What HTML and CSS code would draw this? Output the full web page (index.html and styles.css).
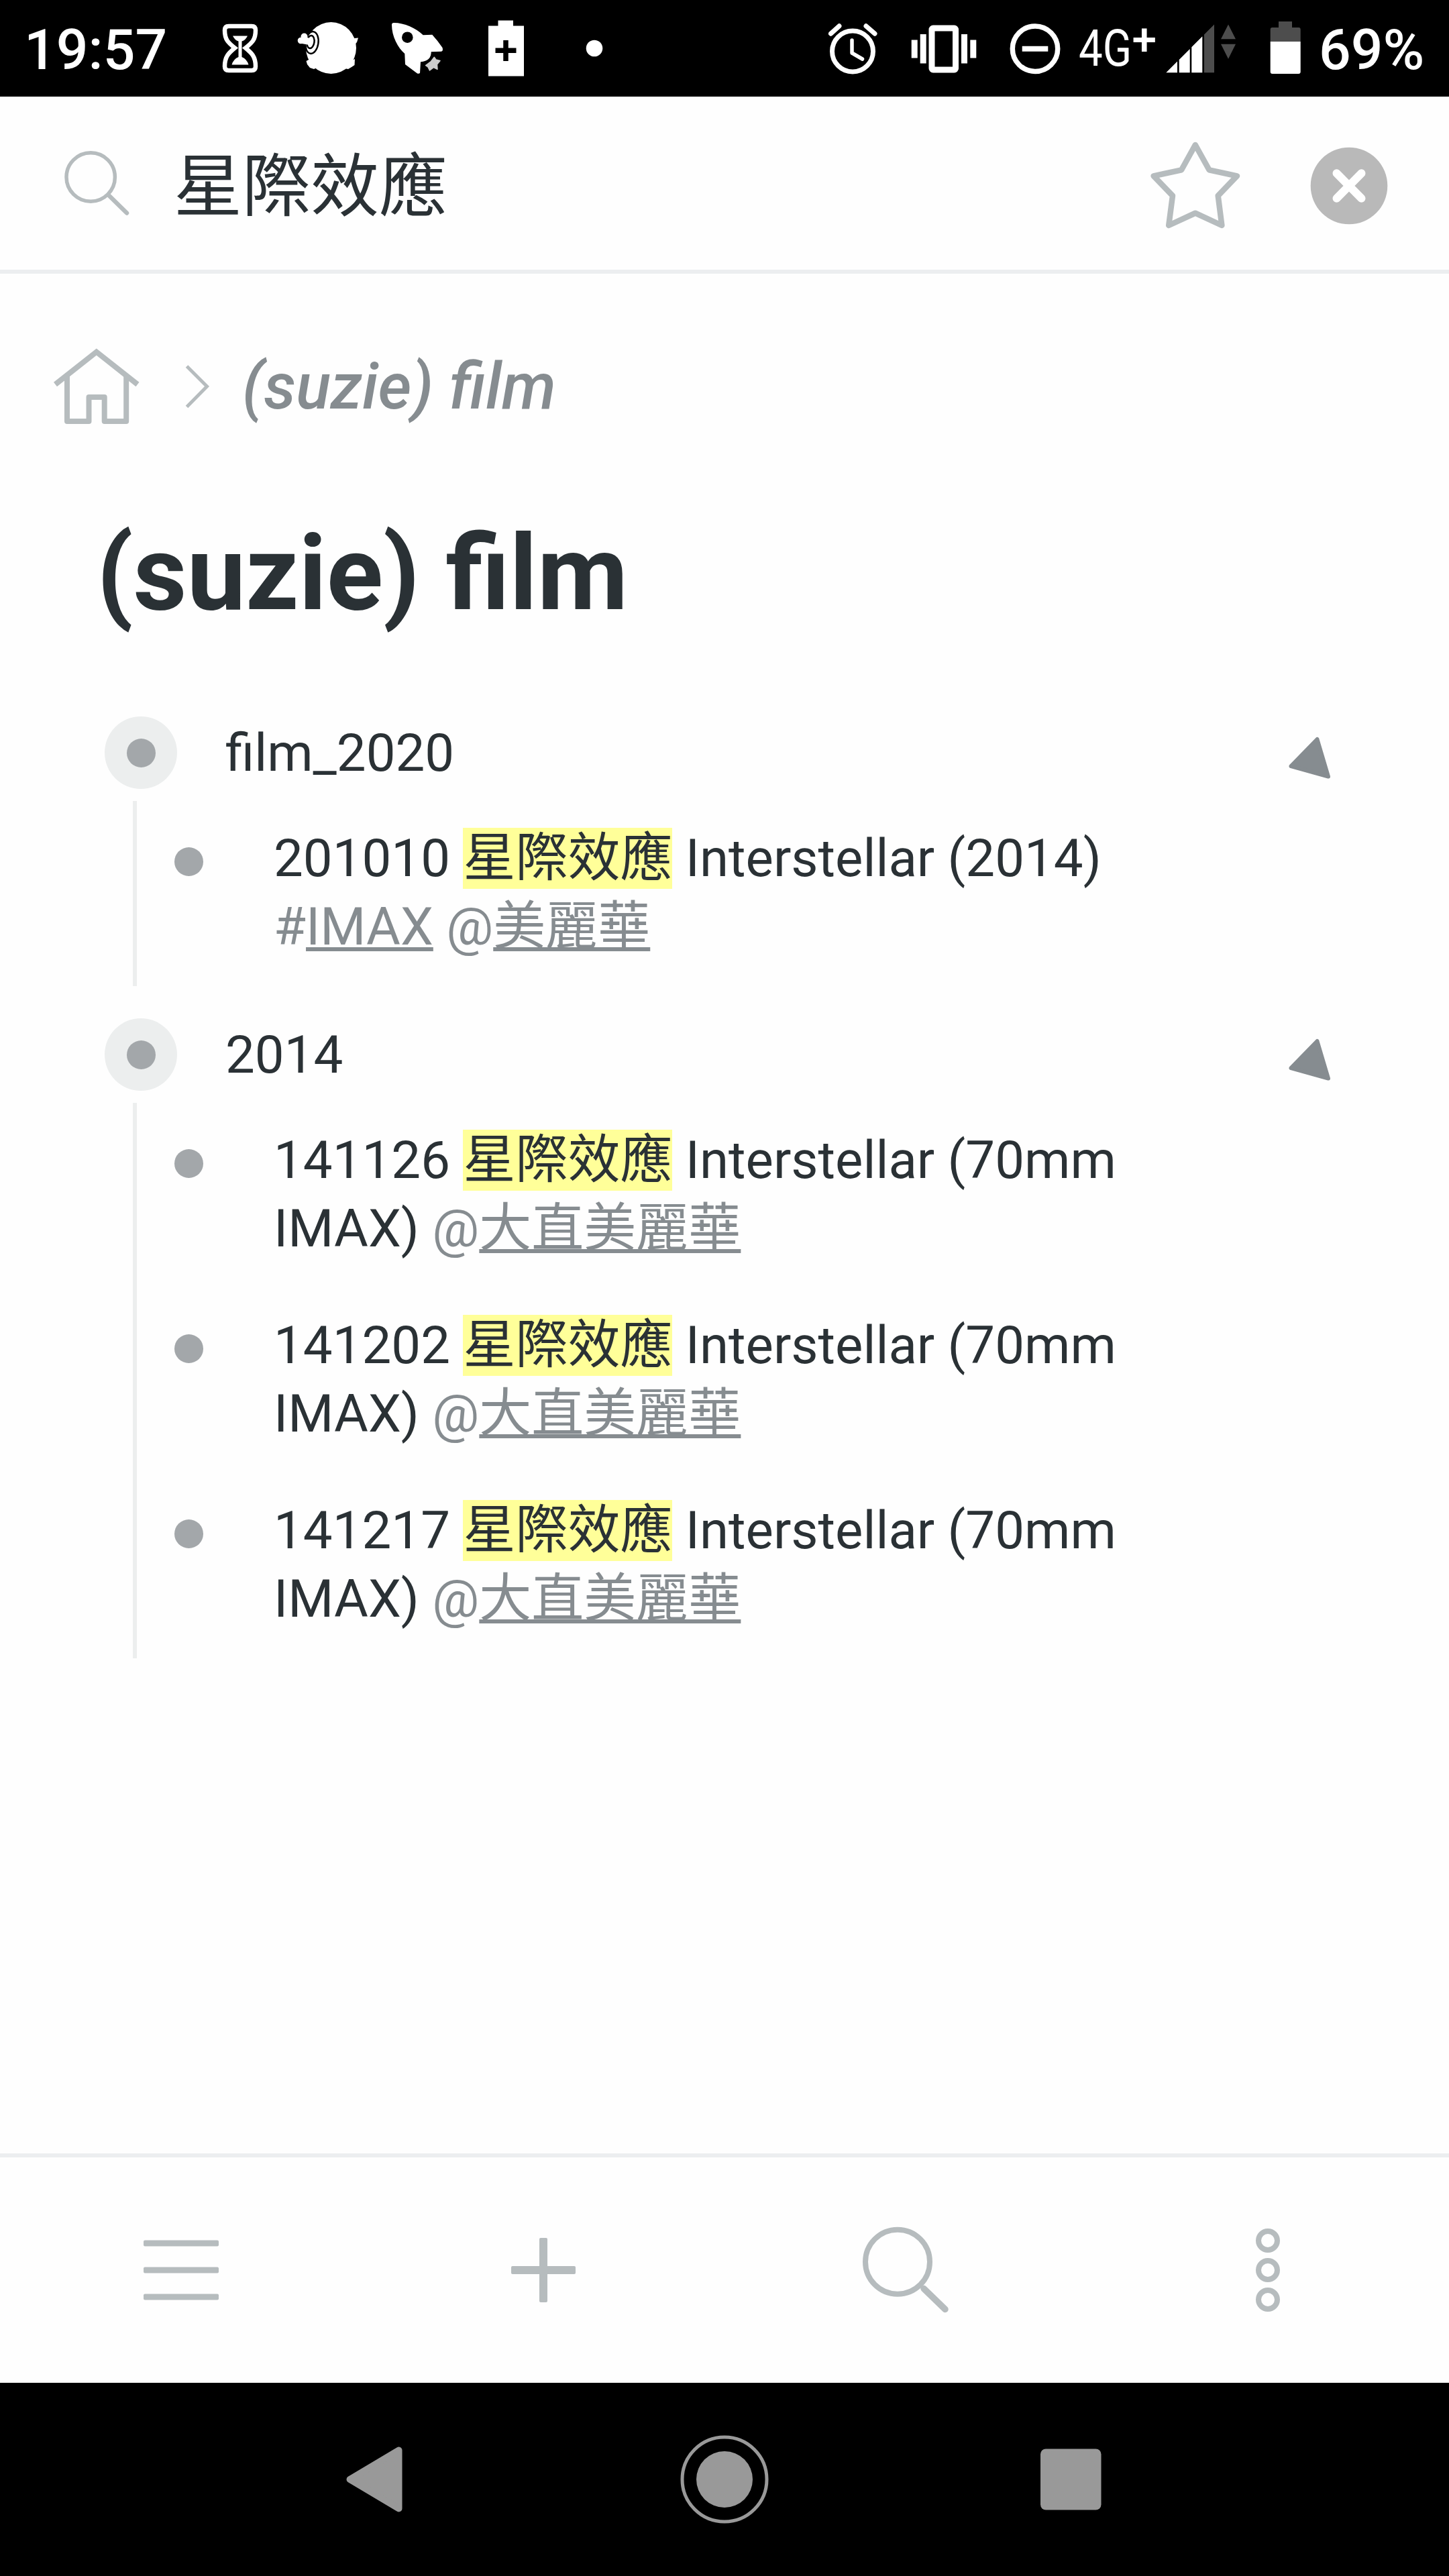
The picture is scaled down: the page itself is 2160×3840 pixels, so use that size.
FILE: index.html
```html
<!DOCTYPE html>
<html lang="zh-Hant">
<head>
  <meta charset="UTF-8" />
  <title>(suzie) film</title>
  <link rel="stylesheet" href="styles.css">
</head>
<body>
  <div class="status-bar">
    <span class="status-text clock">19:57</span>
    <svg class="hourglass" width="60" height="144" viewBox="328 0 60 144">
      <path d="M341 39H375Q381 39 381 45C381 60 375 64 366 71.5C375 79 381 84 381 99Q381 105 375 105H341Q335 105 335 99C335 84 341 79 350 71.5C341 64 335 60 335 45Q335 39 341 39Z" fill="none" stroke="#fff" stroke-width="6.5"/>
      <path d="M347 53.5H369Q366 60 360.500 61.500V85Q368 88 370.500 96.500H345.500Q348 88 355.500 85V61.500Q350 60 347 53.500Z" fill="#fff"/>
    </svg>
    <svg class="ball" width="100" height="144" viewBox="440 0 100 144">
      <path d="M528 57L534 56.500L532 63L529 66Z M456.500 91L462 88L474 100L468 103L462 101L458 96Z M529 88L528.500 97L524 100L519 103L514 102L520 92Z" fill="#fff"/>
      <ellipse cx="493.500" cy="71.500" rx="37.500" ry="38.500" fill="#fff"/>
      <ellipse cx="465" cy="63.500" rx="9.500" ry="16.500" fill="#fff" stroke="#000" stroke-width="2.500" transform="rotate(8 465 63.500)"/>
      <ellipse cx="463" cy="62.500" rx="5.500" ry="9.500" fill="#fff" stroke="#000" stroke-width="2.500" transform="rotate(8 463 62.500)"/>
      <path d="M440 36H455L451 50V58L455 68L453 80H440Z" fill="#000"/>
      <circle cx="453.500" cy="54.500" r="5" fill="#fff"/>
      <circle cx="448.500" cy="60.500" r="4.800" fill="#fff"/>
      <path d="M450 54L462 57Q464 62 461 67L450 65Z" fill="#fff"/>
    </svg>
    <svg class="rocket" width="84" height="144" viewBox="580 0 84 144">
      <path d="M587 34C603 34 620 42 630.700 52.300L644.300 51.700Q652 60 659.500 71Q661 76 658 76.700L642.700 77.300Q643 91 627 92.300L626 109Q624 110.500 621.700 109.300L604 96L603.300 80C593 71 584 54 584 37Q584 34 587 34Z" fill="#fff"/>
      <circle cx="607.300" cy="55.700" r="8.300" fill="#000"/>
      <path d="M647.300 85.300L650 89L656 90.500L651.500 96L652 103.300L646.500 100.500L640.500 105L638 100L634.500 97.500L642.500 91.500Z" fill="#ccc" stroke="#ccc" stroke-width="1.500" stroke-linejoin="round"/>
    </svg>
    <svg class="battery-plus" width="56" height="144" viewBox="726 0 56 144">
      <path d="M742.500 30.500H765V38.500H781V113.500H728V38.500H742.500Z" fill="#fff"/>
      <path d="M754 60V91M738.500 75.300H769.500" stroke="#000" stroke-width="7.500"/>
    </svg>
    <svg class="more-dot" width="26" height="144" viewBox="873 0 26 144">
      <circle cx="886" cy="72" r="12.300" fill="#fff"/>
    </svg>

    <div class="status-right">
      <svg class="alarm" width="76" height="144" viewBox="1233 0 76 144" fill="none" stroke="#fff" stroke-linecap="round">
        <circle cx="1271" cy="76.500" r="30.500" stroke-width="7"/>
        <path d="M1251 38.800L1238.500 50.200M1291 38.800L1304 50.200" stroke-width="7"/>
        <path d="M1270 60V79L1285.500 88" stroke-width="5.500" stroke-linejoin="round"/>
      </svg>
      <svg class="vibrate" width="98" height="144" viewBox="1358 0 98 144">
        <rect x="1389" y="42" width="35.500" height="62" rx="2" fill="none" stroke="#fff" stroke-width="9"/>
        <path d="M1358.700 59.500h9v27h-9zM1371.700 51h9v43.500h-9zM1433 51h9v43.500h-9zM1446.300 59.500h9v27h-9z" fill="#fff"/>
      </svg>
      <svg class="dnd" width="78" height="144" viewBox="1504 0 78 144" fill="none" stroke="#fff">
        <circle cx="1543" cy="72.700" r="33.700" stroke-width="7.500"/>
        <path d="M1523.700 72.700H1562.300" stroke-width="8"/>
      </svg>
      <svg class="network" width="120" height="144" viewBox="1606 0 120 144" fill="#fff">
        <text x="1608" y="98" font-size="76" textLength="79" lengthAdjust="spacingAndGlyphs">4G</text>
        <text x="1687.500" y="82" font-size="66" font-weight="500">+</text>
      </svg>
      <svg class="signal" width="106" height="144" viewBox="1738 0 106 144">
        <path d="M1738.300 108.300L1755 91.600V108.300ZM1757.700 88.900L1773.700 72.900V108.300H1757.700ZM1776.300 70.300L1792.300 54.300V108.300H1776.300Z" fill="#fff"/>
        <path d="M1795 51.600L1810 36.600V108.300H1795ZM1831 36.600L1842 58.300H1820ZM1820 65.700H1842L1831 87.700Z" fill="#4d4d4d"/>
      </svg>
      <svg class="battery" width="46" height="144" viewBox="1893 0 46 144">
        <path d="M1906 32H1926V41H1936Q1938.700 41 1938.700 44V62H1893.700V44Q1893.700 41 1896.500 41H1906Z" fill="#4d4d4d"/>
        <path d="M1893.700 62H1938.700V107Q1938.700 110 1935.700 110H1896.700Q1893.700 110 1893.700 107Z" fill="#fff"/>
      </svg>
      <span class="status-text">69%</span>
    </div>
  </div>

  <div class="search-bar">
    <svg class="search-icon" width="100" height="100" viewBox="94 224 100 100" fill="none" stroke="#b6bcbe">
      <circle cx="135.200" cy="265" r="36.200" stroke-width="5.500"/>
      <path d="M163 293L189 318.500" stroke-width="6.500" stroke-linecap="round"/>
    </svg>
    <span class="query">星際效應</span>
    <svg class="star" width="136" height="136" viewBox="1714 208 136 136">
      <path d="M1781.800 216L1802.500 253.300L1844 262.300L1815.700 291.700L1821.400 336L1781.800 317.700L1742.200 336L1748 291.700L1719.600 262.300L1761.200 253.300Z" fill="none" stroke="#b6bcbe" stroke-width="8.500" stroke-linejoin="round"/>
    </svg>
    <svg class="clear" width="116" height="116" viewBox="1953 218.700 116 116">
      <circle cx="2011" cy="276.700" r="57.300" fill="#b9b9b9"/>
      <path d="M1992.500 258L2029.500 295.500M2029.500 258L1992.500 295.500" stroke="#fff" stroke-width="12" stroke-linecap="round"/>
    </svg>
  </div>

  <div class="page">
    <div class="breadcrumb">
      <svg class="home" width="132" height="120" viewBox="78 516 132 120" fill="none" stroke="#b6bcbe" stroke-width="8" stroke-linejoin="round">
        <path d="M82.500 573L143.800 524.500L205 573" stroke-linejoin="miter"/>
        <path d="M100 558V628H132.500V592H155.700V628H188.200V558"/>
      </svg>
      <svg class="chevron" width="38" height="72" viewBox="275 540 38 72" fill="none" stroke="#b6bcbe" stroke-width="5">
        <path d="M278.500 546L308.500 576L278.500 606.500"/>
      </svg>
      <span class="crumb">(suzie) film</span>
    </div>

    <h1 class="title">(suzie) film</h1>

    <div class="outline">
      <div class="node">
        <div class="parent">
          <span class="halo"><span class="dot"></span></span>
          <span class="name">film_2020</span>
          <svg class="toggle" width="66" height="66" viewBox="1919 1097 66 66">
            <path d="M1963.500 1102L1980 1157.500L1924.500 1142Z" fill="#868c90" stroke="#868c90" stroke-width="6" stroke-linejoin="round"/>
          </svg>
        </div>
        <div class="children">
          <div class="item">
            <span class="dot"></span>
            <p>201010 <mark>星際效應</mark> Interstellar (2014) <span class="tag">#<u>IMAX</u></span> <span class="tag">@<u>美麗華</u></span></p>
          </div>
        </div>
      </div>

      <div class="node">
        <div class="parent">
          <span class="halo"><span class="dot"></span></span>
          <span class="name">2014</span>
          <svg class="toggle" width="66" height="66" viewBox="1919 1097 66 66">
            <path d="M1963.500 1102L1980 1157.500L1924.500 1142Z" fill="#868c90" stroke="#868c90" stroke-width="6" stroke-linejoin="round"/>
          </svg>
        </div>
        <div class="children">
          <div class="item">
            <span class="dot"></span>
            <p>141126 <mark>星際效應</mark> Interstellar (70mm IMAX) <span class="tag">@<u>大直美麗華</u></span></p>
          </div>
          <div class="item">
            <span class="dot"></span>
            <p>141202 <mark>星際效應</mark> Interstellar (70mm IMAX) <span class="tag">@<u>大直美麗華</u></span></p>
          </div>
          <div class="item">
            <span class="dot"></span>
            <p>141217 <mark>星際效應</mark> Interstellar (70mm IMAX) <span class="tag">@<u>大直美麗華</u></span></p>
          </div>
        </div>
      </div>
    </div>
  </div>

  <div class="toolbar">
    <div class="tool">
      <svg width="140" height="140" viewBox="200 3314 140 140" fill="#b6bcbe">
        <rect x="214" y="3339.500" width="112" height="9" rx="2"/>
        <rect x="214" y="3379.500" width="112" height="9" rx="2"/>
        <rect x="214" y="3419.500" width="112" height="9" rx="2"/>
      </svg>
    </div>
    <div class="tool">
      <svg width="140" height="140" viewBox="740 3314 140 140" fill="#b6bcbe">
        <rect x="762" y="3378" width="96" height="12" rx="2"/>
        <rect x="804" y="3336" width="12" height="96" rx="2"/>
      </svg>
    </div>
    <div class="tool">
      <svg width="140" height="140" viewBox="1280 3314 140 140" fill="none" stroke="#b6bcbe">
        <circle cx="1338" cy="3371.700" r="48" stroke-width="8"/>
        <path d="M1377 3411.500L1409 3442.500" stroke-width="9.500" stroke-linecap="round"/>
      </svg>
    </div>
    <div class="tool">
      <svg width="140" height="140" viewBox="1820 3314 140 140" fill="none" stroke="#b6bcbe" stroke-width="8">
        <circle cx="1890" cy="3340" r="14"/>
        <circle cx="1890" cy="3384" r="14"/>
        <circle cx="1890" cy="3428" r="14"/>
      </svg>
    </div>
  </div>

  <div class="nav-bar">
    <svg width="140" height="140" viewBox="490 3626 140 140">
      <path d="M594.500 3652.500V3739.500L521.500 3696Z" fill="#999" stroke="#999" stroke-width="10" stroke-linejoin="round"/>
    </svg>
    <svg width="140" height="140" viewBox="1010 3626 140 140">
      <circle cx="1080" cy="3696" r="63" fill="none" stroke="#999" stroke-width="5"/>
      <circle cx="1080" cy="3696" r="42" fill="#999"/>
    </svg>
    <svg width="140" height="140" viewBox="1530 3626 140 140">
      <rect x="1551" y="3650.500" width="90.500" height="91" rx="8" fill="#999"/>
    </svg>
  </div>
</body>
</html>
```

FILE: styles.css
```css
* {
  box-sizing: border-box;
}
body {
  margin: 0;
  width: 2160px;
  height: 3840px;
  background: #fefefe;
  color: #2a3135;
  font-family: Roboto, "Noto Sans CJK TC", sans-serif;
  display: flex;
  flex-direction: column;
  overflow: hidden;
}
svg {
  display: block;
  flex: none;
}
.status-bar {
  height: 144px;
  background: #000;
  color: #fff;
  display: flex;
  align-items: center;
}
.status-text {
  font-size: 84px;
  font-weight: 500;
  line-height: 138px;
  padding-top: 6px;
}
.clock {
  width: 292px;
  padding-left: 36px;
}
.hourglass {
  margin-left: 36px;
}
.ball {
  margin-left: 52px;
}
.rocket {
  margin-left: 40px;
}
.battery-plus {
  margin-left: 62px;
}
.more-dot {
  margin-left: 91px;
}
.status-right {
  display: flex;
  align-items: center;
  margin-left: 334px;
}
.vibrate {
  margin-left: 49px;
}
.dnd {
  margin-left: 48px;
}
.network {
  margin-left: 24px;
}
.signal {
  margin-left: 12px;
}
.battery {
  margin-left: 49px;
}
.status-right .status-text {
  margin-left: 27px;
}
.search-bar {
  height: 264px;
  border-bottom: 6px solid #eceef0;
  display: flex;
  align-items: center;
  padding-left: 94px;
}
.query {
  flex: 1;
  font-size: 102px;
  line-height: 130px;
  padding: 12px 0 0 65px;
}
.star {
  margin-top: 6px;
}
.clear {
  margin: 7px 91px 0 103px;
}
.page {
  flex: 1;
}
.breadcrumb {
  height: 336px;
  padding-left: 78px;
  display: flex;
  align-items: center;
}
.chevron {
  margin-left: 65px;
}
.crumb {
  margin-left: 48px;
  font-size: 96px;
  font-weight: 500;
  font-style: italic;
  color: #868c90;
}
.title {
  margin: 15px 0 0 144px;
  font-size: 156px;
  font-weight: 700;
  line-height: 192px;
}
.outline {
  padding-top: 121px;
  font-size: 78px;
  line-height: 102px;
}
.node {
  margin-bottom: 52px;
}
.parent {
  height: 122px;
  padding: 0 175px 0 156px;
  display: flex;
  align-items: flex-start;
}
.halo {
  width: 108px;
  height: 108px;
  margin-top: -4px;
  border-radius: 50%;
  background: #eceeee;
  display: flex;
  align-items: center;
  justify-content: center;
}
.dot {
  flex: none;
  width: 43px;
  height: 43px;
  border-radius: 50%;
  background: #a3a7aa;
}
.name {
  flex: 1;
  margin-left: 72px;
}
.toggle {
  margin-top: 25px;
}
.children {
  margin-left: 198px;
  border-left: 6px solid #eceeee;
}
.item {
  display: flex;
  align-items: flex-start;
  padding: 35px 0 37px 56px;
}
.item .dot {
  margin-top: 34px;
}
.item p {
  margin: 0 0 0 105px;
  width: 1416px;
}
mark {
  background: #ffff99;
  color: inherit;
}
.tag {
  color: #868c90;
}
.tag u {
  text-decoration-thickness: 6px;
  text-underline-offset: 4px;
  text-decoration-skip-ink: none;
}
.toolbar {
  height: 342px;
  border-top: 6px solid #eceef0;
  display: flex;
}
.tool {
  flex: 1;
  display: flex;
  align-items: center;
  justify-content: center;
}
.nav-bar {
  height: 288px;
  background: #000;
  display: flex;
  align-items: center;
  justify-content: center;
  gap: 380px;
}
```
